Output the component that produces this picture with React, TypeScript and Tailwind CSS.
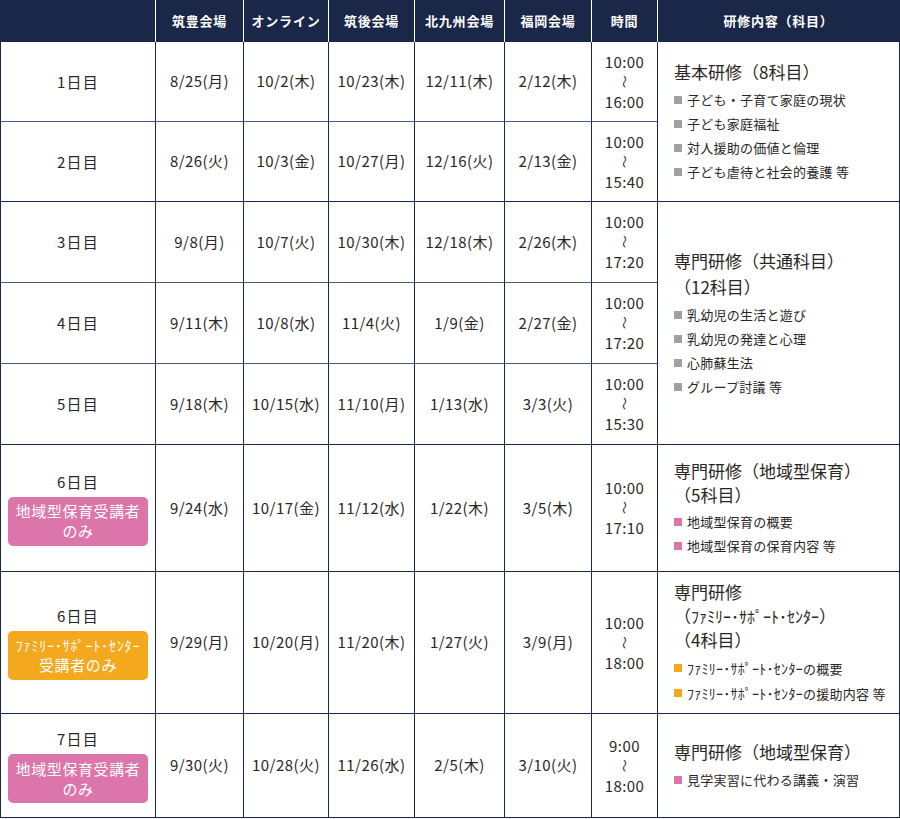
import React from "react"

type Badge = "pink" | "orange" | null

interface Row {
  day: string
  badge: Badge
  dates: string[]
  time: [string, string]
}

const venues = ["筑豊会場", "オンライン", "筑後会場", "北九州会場", "福岡会場"]

const rows: Row[] = [
  { day: "1日目", badge: null, dates: ["8/25(月)", "10/2(木)", "10/23(木)", "12/11(木)", "2/12(木)"], time: ["10:00", "16:00"] },
  { day: "2日目", badge: null, dates: ["8/26(火)", "10/3(金)", "10/27(月)", "12/16(火)", "2/13(金)"], time: ["10:00", "15:40"] },
  { day: "3日目", badge: null, dates: ["9/8(月)", "10/7(火)", "10/30(木)", "12/18(木)", "2/26(木)"], time: ["10:00", "17:20"] },
  { day: "4日目", badge: null, dates: ["9/11(木)", "10/8(水)", "11/4(火)", "1/9(金)", "2/27(金)"], time: ["10:00", "17:20"] },
  { day: "5日目", badge: null, dates: ["9/18(木)", "10/15(水)", "11/10(月)", "1/13(水)", "3/3(火)"], time: ["10:00", "15:30"] },
  { day: "6日目", badge: "pink", dates: ["9/24(水)", "10/17(金)", "11/12(水)", "1/22(木)", "3/5(木)"], time: ["10:00", "17:10"] },
  { day: "6日目", badge: "orange", dates: ["9/29(月)", "10/20(月)", "11/20(木)", "1/27(火)", "3/9(月)"], time: ["10:00", "18:00"] },
  { day: "7日目", badge: "pink", dates: ["9/30(火)", "10/28(火)", "11/26(水)", "2/5(木)", "3/10(火)"], time: ["9:00", "18:00"] },
]

// rows whose bottom line is the thin lighter divider (inside a content group)
const lightBottom = [0, 2, 3]

const FS = "ﾌｧﾐﾘｰ･ｻﾎﾟｰﾄ･ｾﾝﾀｰ"

function Bullet({ color }: { color: "gray" | "pink" | "orange" }) {
  const cls =
    color === "pink" ? "bg-[#dc75a9]" : color === "orange" ? "bg-[#f4a81d]" : "bg-[#a0a0a0]"
  return <span className={`inline-block w-[8px] h-[8px] mr-[5px] shrink-0 ${cls}`} />
}

function Item({ color, children }: { color: "gray" | "pink" | "orange"; children: React.ReactNode }) {
  return (
    <li className="flex items-center text-[13px] leading-[24px] tracking-[0.02em]">
      <Bullet color={color} />
      <span>{children}</span>
    </li>
  )
}

function Content({ rowIndex }: { rowIndex: number }) {
  if (rowIndex === 0) {
    return (
      <div>
        <p className="text-[17px] leading-[26px]">基本研修（8科目）</p>
        <ul className="mt-[3px]">
          <Item color="gray">子ども・子育て家庭の現状</Item>
          <Item color="gray">子ども家庭福祉</Item>
          <Item color="gray">対人援助の価値と倫理</Item>
          <Item color="gray">子ども虐待と社会的養護 等</Item>
        </ul>
      </div>
    )
  }
  if (rowIndex === 2) {
    return (
      <div>
        <p className="text-[17px] leading-[26px]">専門研修（共通科目）</p>
        <p className="text-[17px] leading-[26px]">（12科目）</p>
        <ul className="mt-[3px]">
          <Item color="gray">乳幼児の生活と遊び</Item>
          <Item color="gray">乳幼児の発達と心理</Item>
          <Item color="gray">心肺蘇生法</Item>
          <Item color="gray">グループ討議 等</Item>
        </ul>
      </div>
    )
  }
  if (rowIndex === 5) {
    return (
      <div>
        <p className="text-[17px] leading-[24px]">専門研修（地域型保育）</p>
        <p className="text-[17px] leading-[24px]">（5科目）</p>
        <ul className="mt-[3px]">
          <Item color="pink">地域型保育の概要</Item>
          <Item color="pink">地域型保育の保育内容 等</Item>
        </ul>
      </div>
    )
  }
  if (rowIndex === 6) {
    return (
      <div>
        <p className="text-[17px] leading-[24px]">専門研修</p>
        <p className="text-[17px] leading-[24px]">
          （<span className="text-[16px]">{FS}</span>）
        </p>
        <p className="text-[17px] leading-[24px]">（4科目）</p>
        <ul className="mt-[4px]">
          <Item color="orange">
            <span className="text-[14px]">{FS}</span>の概要
          </Item>
          <Item color="orange">
            <span className="text-[14px]">{FS}</span>の援助内容 等
          </Item>
        </ul>
      </div>
    )
  }
  return (
    <div>
      <p className="text-[17px] leading-[26px]">専門研修（地域型保育）</p>
      <ul className="mt-[3px]">
        <Item color="pink">見学実習に代わる講義・演習</Item>
      </ul>
    </div>
  )
}

function DayBadge({ badge }: { badge: Badge }) {
  if (badge === "pink") {
    return (
      <div className="mt-[4px] w-[140px] h-[49px] rounded-[5px] bg-[#dc75a9] text-white flex flex-col items-center justify-center text-[15px] leading-[20px] tracking-[0.04em]">
        <span>地域型保育受講者</span>
        <span>のみ</span>
      </div>
    )
  }
  if (badge === "orange") {
    return (
      <div className="mt-[4px] w-[140px] h-[49px] rounded-[5px] bg-[#f4a81d] text-white flex flex-col items-center justify-center">
        <span className="text-[14px] leading-[19px] tracking-[0.06em]">{FS}</span>
        <span className="text-[15px] leading-[20px] tracking-[0.04em]">受講者のみ</span>
      </div>
    )
  }
  return null
}

export default function App() {
  return (
    <div
      className="w-[900px] bg-white text-[#2b2624]"
      style={{ fontFamily: '"Noto Sans CJK JP", "Noto Sans", sans-serif' }}
    >
      <div className="grid grid-cols-[156px_88px_85px_86px_90px_87px_66px_242px] grid-rows-[42px_80px_80px_81px_81px_81px_127px_142px_104px]">
        {/* header */}
        <div className="bg-[#1b2749] border-r border-white" />
        {venues.map((v) => (
          <div
            key={v}
            className="bg-[#1b2749] border-r border-white flex items-center justify-center text-white text-[13px] font-bold tracking-[0.06em]"
          >
            {v}
          </div>
        ))}
        <div className="bg-[#1b2749] border-r border-white flex items-center justify-center text-white text-[13px] font-bold tracking-[0.06em]">
          時間
        </div>
        <div className="bg-[#1b2749] border-r border-[#1b2749] flex items-center justify-center text-white text-[13px] font-bold tracking-[0.06em]">
          研修内容（科目）
        </div>

        {rows.map((row, i) => {
          const bottom = lightBottom.includes(i) ? "border-b-[#4a5a7e]" : "border-b-[#1b2749]"
          const cell = `border-r border-b border-r-[#1b2749] ${bottom} flex items-center justify-center`
          return (
            <React.Fragment key={i}>
              <div className={`${cell} border-l border-l-[#1b2749] flex-col`}>
                <span className="text-[15px] leading-[22px] tracking-[0.08em]">{row.day}</span>
                <DayBadge badge={row.badge} />
              </div>
              {row.dates.map((d, j) => (
                <div key={j} className={cell}>
                  <span className="text-[15px] tracking-[0.03em]">{d}</span>
                </div>
              ))}
              <div className={`${cell} flex-col text-[15px] leading-[20px] tracking-[0.03em]`}>
                <span>{row.time[0]}</span>
                <span className="inline-block rotate-90 text-[13px] leading-[20px]">〜</span>
                <span>{row.time[1]}</span>
              </div>
              {i === 0 && (
                <div className="row-span-2 border-r border-b border-[#1b2749] flex items-center pl-[16px]">
                  <Content rowIndex={0} />
                </div>
              )}
              {i === 2 && (
                <div className="row-span-3 border-r border-b border-[#1b2749] flex items-center pl-[16px]">
                  <Content rowIndex={2} />
                </div>
              )}
              {i >= 5 && (
                <div className="border-r border-b border-[#1b2749] flex items-center pl-[16px]">
                  <Content rowIndex={i} />
                </div>
              )}
            </React.Fragment>
          )
        })}
      </div>
    </div>
  )
}
